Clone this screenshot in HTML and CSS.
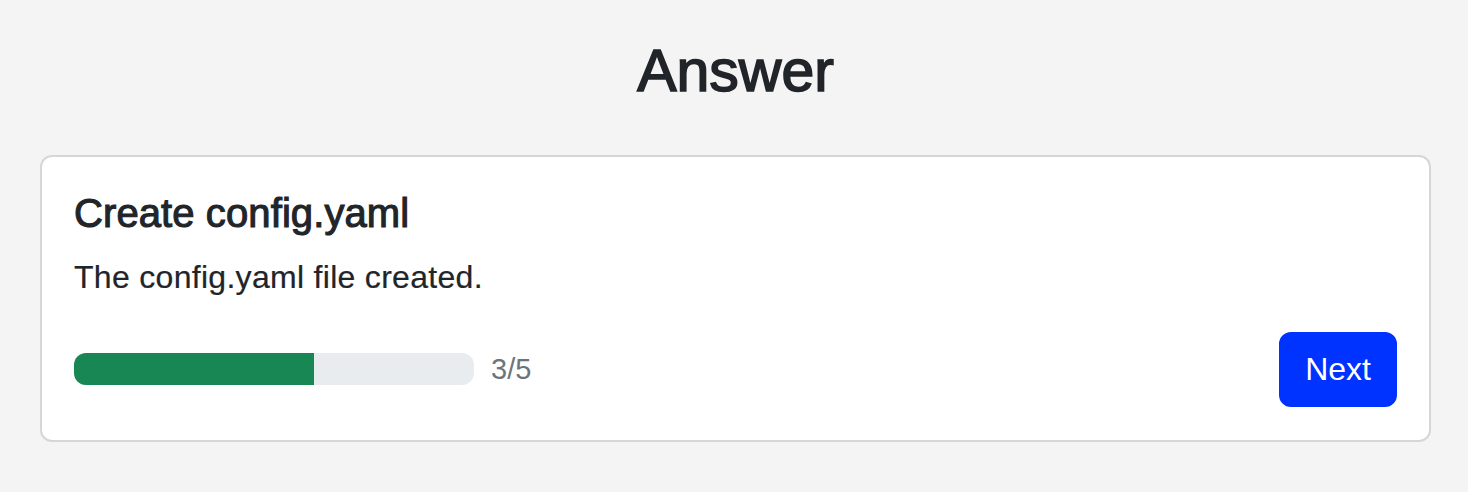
FILE: index.html
```html
<!DOCTYPE html>
<html lang="en">
<head>
<meta charset="utf-8">
<title>Answer</title>
<link rel="stylesheet" href="styles.css">
</head>
<body>
<main class="page">
  <h1 class="page-title">Answer</h1>
  <section class="card">
    <h5 class="card-title">Create config.yaml</h5>
    <p class="card-text">The config.yaml file created.</p>
    <div class="card-footer">
      <div class="progress-wrap">
        <div class="progress"><div class="progress-bar" style="width: 60%"></div></div>
        <span class="progress-label">3/5</span>
      </div>
      <button class="btn-next" type="button">Next</button>
    </div>
  </section>
</main>
</body>
</html>
```

FILE: styles.css
```css
* { box-sizing: border-box; }
html, body {
  margin: 0;
  padding: 0;
  background: #f4f4f4;
  font-family: "Liberation Sans", Arial, Helvetica, sans-serif;
  color: #212529;
}
.page {
  padding: 36px 37px 0 40px;
}
.page-title {
  margin: 0 0 48px;
  text-align: center;
  font-size: 59px;
  line-height: 1.2;
  font-weight: 400;
  -webkit-text-stroke: 1.6px #212529;
}
.card {
  background: #fff;
  border: 2px solid #d6d6d6;
  border-radius: 12px;
  padding: 32px 32px 33px 32px;
}
.card-title {
  margin: 0 0 16px;
  font-size: 40px;
  line-height: 1.2;
  font-weight: 400;
  letter-spacing: 0.1px;
  -webkit-text-stroke: 1.1px #212529;
}
.card-text {
  margin: 0 0 31px;
  font-size: 32px;
  line-height: 1.5;
  letter-spacing: 0.3px;
  -webkit-text-stroke: 0.2px #212529;
}
.card-footer {
  display: flex;
  align-items: center;
  justify-content: space-between;
}
.progress-wrap {
  display: flex;
  align-items: center;
  gap: 17px;
}
.progress {
  width: 400px;
  height: 32px;
  background: #e9ecef;
  border-radius: 12px;
  overflow: hidden;
  display: flex;
}
.progress-bar {
  background: #198754;
  height: 100%;
}
.progress-label {
  font-size: 29px;
  color: #6c757d;
  line-height: 1.5;
}
.btn-next {
  font-family: inherit;
  font-size: 32px;
  line-height: 1.5;
  color: #fff;
  background: #0033ff;
  border: 2px solid #0033ff;
  border-radius: 12px;
  padding: 11px 24px 12px;
  cursor: pointer;
}
```
